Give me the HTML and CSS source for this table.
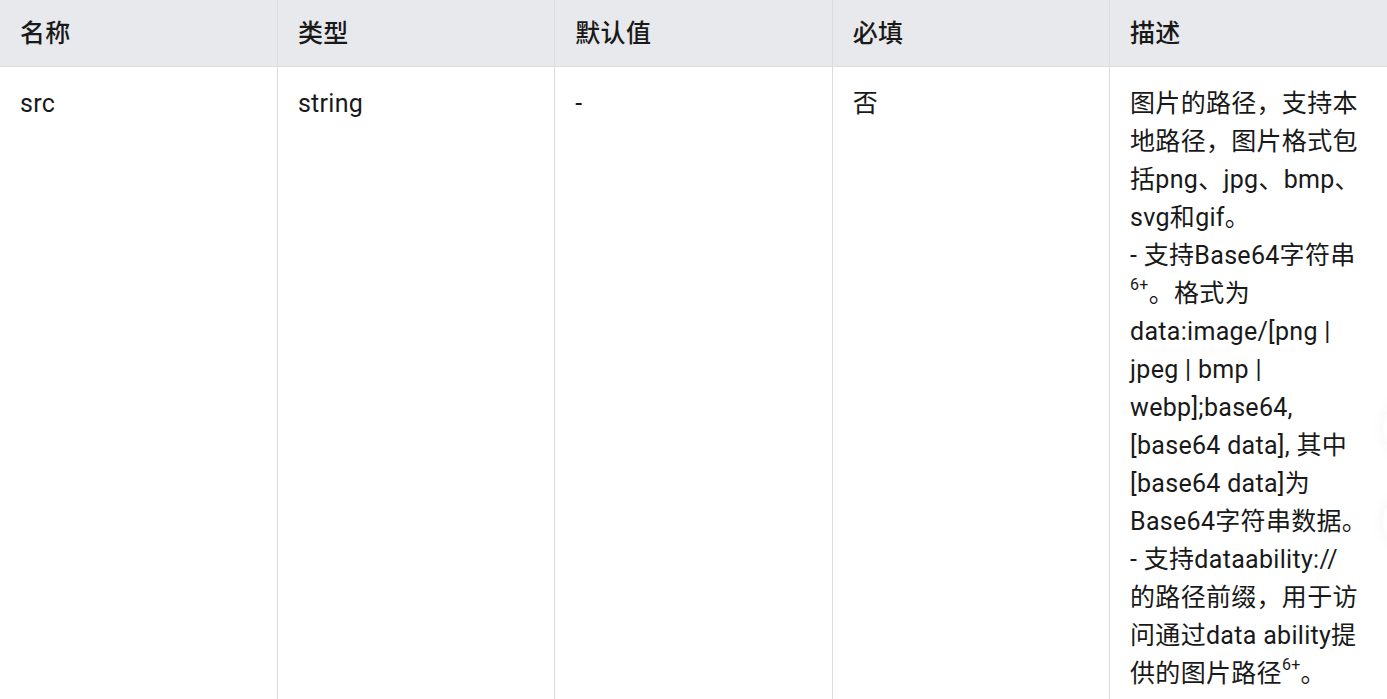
FILE: index.html
```html
<!DOCTYPE html>
<html lang="zh-CN">
<head>
<meta charset="utf-8">
<title>属性</title>
<link rel="stylesheet" href="styles.css">
</head>
<body>
<table class="attr-table">
  <thead>
    <tr>
      <th>名称</th>
      <th>类型</th>
      <th>默认值</th>
      <th>必填</th>
      <th>描述</th>
    </tr>
  </thead>
  <tbody>
    <tr>
      <td>src</td>
      <td>string</td>
      <td>-</td>
      <td>否</td>
      <td class="desc">图片的路径，支持本<br>地路径，图片格式包<br>括png、jpg、bmp、<br>svg和gif。<br>- 支持Base64字符串<br><sup>6+</sup>。格式为<br>data:image/[png |<br>jpeg | bmp |<br>webp];base64,<br>[base64 data], 其中<br>[base64 data]为<br>Base64字符串数据。<br>- 支持dataability://<br>的路径前缀，用于访<br>问通过data ability提<br>供的图片路径<sup>6+</sup>。</td>
    </tr>
  </tbody>
</table>
<div class="float-btn float-btn-top"></div>
<div class="float-btn float-btn-bottom"></div>
</body>
</html>
```

FILE: styles.css
```css
html, body {
  margin: 0;
  padding: 0;
  background: #ffffff;
}

body {
  font-family: "Roboto", "Noto Sans CJK SC", sans-serif;
  font-size: 25px;
  letter-spacing: 0.3px;
  color: #191919;
  overflow: hidden;
}

.attr-table {
  width: 1387px;
  border-collapse: collapse;
  table-layout: fixed;
}

.attr-table th,
.attr-table td {
  text-align: left;
  vertical-align: top;
  line-height: 38px;
  padding: 18px 20px 16px 20px;
  border-left: 1px solid #dcdcdc;
  border-bottom: 1px solid #dcdcdc;
}

.attr-table th:first-child,
.attr-table td:first-child {
  border-left: none;
}

.attr-table th {
  background: #e8e9ec;
  font-weight: 500;
  padding-top: 15px;
  padding-bottom: 13px;
}

.attr-table td {
  font-weight: 400;
}

.attr-table .desc {
  white-space: nowrap;
  padding-bottom: 40px;
}

.attr-table sup {
  font-size: 16px;
  line-height: 0;
  vertical-align: 12px;
}

.float-btn {
  position: fixed;
  right: -56px;
  width: 60px;
  height: 60px;
  border-radius: 50%;
  background: #ffffff;
  box-shadow: 0 0 16px rgba(0, 0, 0, 0.05);
}

.float-btn-top {
  top: 398px;
}

.float-btn-bottom {
  top: 492px;
}
```
